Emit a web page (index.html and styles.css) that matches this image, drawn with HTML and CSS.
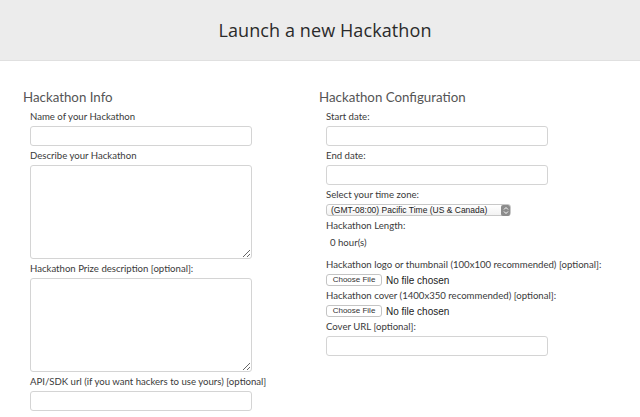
FILE: index.html
```html
<!DOCTYPE html>
<html>
<head>
<meta charset="utf-8">
<title>Launch a new Hackathon</title>
<link rel="stylesheet" href="styles.css">
</head>
<body>
<header class="top">
  <h1 class="title">Launch a new Hackathon</h1>
</header>
<main class="page">
  <section class="col">
    <h2 class="col-title">Hackathon Info</h2>
    <div class="fields">
      <label class="lbl">Name of your Hackathon</label>
      <input class="field" type="text">
      <label class="lbl">Describe your Hackathon</label>
      <textarea class="area"></textarea>
      <label class="lbl">Hackathon Prize description [optional]:</label>
      <textarea class="area"></textarea>
      <label class="lbl">API/SDK url (if you want hackers to use yours) [optional]</label>
      <input class="field" type="text">
    </div>
  </section>
  <section class="col">
    <h2 class="col-title">Hackathon Configuration</h2>
    <div class="fields">
      <label class="lbl">Start date:</label>
      <input class="field" type="text">
      <label class="lbl">End date:</label>
      <input class="field" type="text">
      <label class="lbl">Select your time zone:</label>
      <div class="select">
        <span class="select-text">(GMT-08:00) Pacific Time (US &amp; Canada)</span>
        <span class="select-arrow">
          <svg width="6" height="9" viewBox="0 0 6 9"><path d="M1 3.5 L3 1.5 L5 3.5 M1 5.5 L3 7.5 L5 5.5" fill="none" stroke="#fff" stroke-width="1"/></svg>
        </span>
      </div>
      <label class="lbl">Hackathon Length:</label>
      <p class="hours">0 hour(s)</p>
      <label class="lbl">Hackathon logo or thumbnail (100x100 recommended) [optional]:</label>
      <div class="file-row"><span class="file-btn">Choose File</span><span class="file-name">No file chosen</span></div>
      <label class="lbl">Hackathon cover (1400x350 recommended) [optional]:</label>
      <div class="file-row"><span class="file-btn">Choose File</span><span class="file-name">No file chosen</span></div>
      <label class="lbl">Cover URL [optional]:</label>
      <input class="field" type="text">
    </div>
  </section>
</main>
</body>
</html>
```
FILE: styles.css
```css
* { box-sizing: border-box; }
body {
  margin: 0;
  background: #fff;
  font-family: "Lato", "DejaVu Sans", sans-serif;
  color: #3a3a3a;
}
.top {
  height: 61px;
  background: #ececec;
  border-bottom: 1px solid #e0e0e0;
  display: flex;
  align-items: center;
  justify-content: center;
  padding-left: 10px;
}
.title {
  margin: 0;
  font-family: "Open Sans", sans-serif;
  font-size: 18px;
  font-weight: 400;
  color: #2a2a2a;
  letter-spacing: 0.1px;
}
.page {
  display: grid;
  grid-template-columns: 296px 296px;
  padding: 27px 0 0 23px;
}
.col-title {
  margin: 0 0 4px;
  font-size: 13.3px;
  line-height: 18px;
  font-weight: 400;
  color: #555;
}
.fields {
  display: flex;
  flex-direction: column;
  align-items: flex-start;
  padding-left: 7px;
}
.lbl {
  display: block;
  font-size: 9.6px;
  line-height: 13px;
  margin-bottom: 3px;
  color: #3a3a3a;
  white-space: nowrap;
}
.field, .area {
  width: 222px;
  border: 1px solid #d4d4d4;
  border-radius: 3px;
  background: #fff;
  margin: 0 0 3px;
  padding: 0;
  font: inherit;
}
.field { height: 20px; }
.area { height: 94px; resize: vertical; }
.select {
  width: 185px;
  height: 12px;
  display: flex;
  align-items: center;
  justify-content: space-between;
  border: 1px solid #c8c8c8;
  border-radius: 3px;
  background: linear-gradient(#fff, #f2f2f2);
  margin-bottom: 3px;
  padding-left: 4px;
}
.select-text {
  font-family: "Liberation Sans", Arial, sans-serif;
  font-size: 8.5px;
  color: #222;
  white-space: nowrap;
}
.select-arrow {
  width: 9px;
  height: 11px;
  background: #8c8c8c;
  border-radius: 2px;
  display: flex;
  align-items: center;
  justify-content: center;
}
.hours {
  margin: 1px 0 9px 4px;
  font-size: 9.6px;
  line-height: 13px;
}
.file-row {
  display: flex;
  align-items: center;
  height: 12px;
  margin-bottom: 3px;
}
.file-btn {
  height: 12px;
  width: 56px;
  border: 1px solid #c4c4c4;
  border-radius: 3px;
  background: #fff;
  font-family: "Liberation Sans", Arial, sans-serif;
  font-size: 8px;
  line-height: 10px;
  color: #333;
  text-align: center;
}
.file-name {
  margin-left: 4px;
  font-family: "Liberation Sans", Arial, sans-serif;
  font-size: 10px;
  color: #222;
}
```
